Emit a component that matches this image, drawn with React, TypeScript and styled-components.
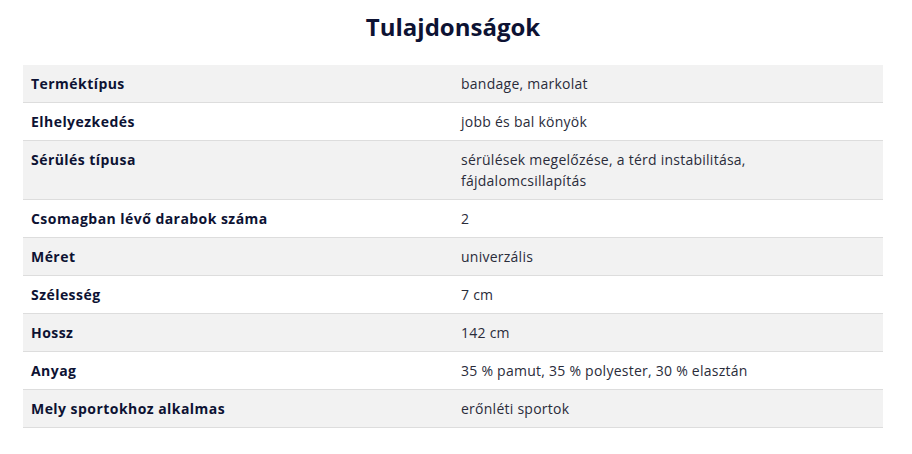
import React from "react";
import styled, { createGlobalStyle } from "styled-components";

const Global = createGlobalStyle`
  html, body { margin: 0; padding: 0; background: #ffffff; }
  body { font-family: "Open Sans", "Noto Sans", sans-serif; }
`;

const Page = styled.div`
  width: 912px;
  padding: 10px 29px 0 23px;
  box-sizing: border-box;
`;

const Title = styled.h2`
  margin: 0 0 17px;
  height: 38px;
  line-height: 34px;
  text-align: center;
  font-size: 24px;
  font-weight: 700;
  color: #0d1233;
`;

const Table = styled.div`
  display: flex;
  flex-direction: column;
  width: 860px;
`;

const Row = styled.div<{ $shaded: boolean }>`
  display: grid;
  grid-template-columns: 1fr 1fr;
  background: ${(p) => (p.$shaded ? "#f2f2f2" : "#ffffff")};
  border-bottom: 1px solid #dddddd;
`;

const Label = styled.div`
  padding: 8px;
  font-size: 14px;
  line-height: 21px;
  font-weight: 700;
  letter-spacing: 0.45px;
  color: #0d1233;
`;

const Value = styled.div`
  padding: 8px 24px 8px 8px;
  font-size: 14px;
  line-height: 21px;
  font-weight: 400;
  letter-spacing: 0.25px;
  color: #2a2c3a;
`;

const rows: [string, string][] = [
  ["Terméktípus", "bandage, markolat"],
  ["Elhelyezkedés", "jobb és bal könyök"],
  ["Sérülés típusa", "sérülések megelőzése, a térd instabilitása, fájdalomcsillapítás"],
  ["Csomagban lévő darabok száma", "2"],
  ["Méret", "univerzális"],
  ["Szélesség", "7 cm"],
  ["Hossz", "142 cm"],
  ["Anyag", "35 % pamut, 35 % polyester, 30 % elasztán"],
  ["Mely sportokhoz alkalmas", "erőnléti sportok"],
];

export default function App() {
  return (
    <>
      <Global />
      <Page>
        <Title>Tulajdonságok</Title>
        <Table>
          {rows.map(([k, v], i) => (
            <Row key={k} $shaded={i % 2 === 0}>
              <Label>{k}</Label>
              <Value>{v}</Value>
            </Row>
          ))}
        </Table>
      </Page>
    </>
  );
}
